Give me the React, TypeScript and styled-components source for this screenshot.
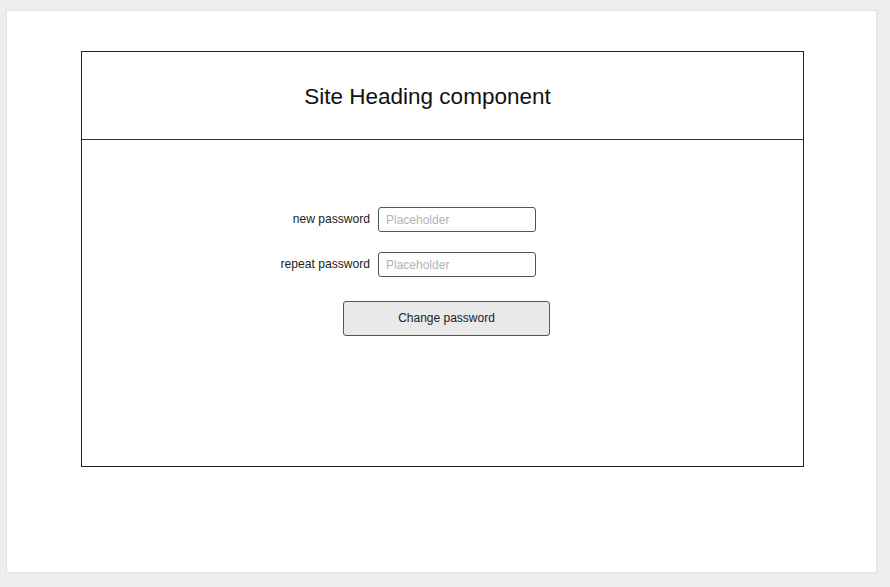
import React from "react";
import styled, { createGlobalStyle } from "styled-components";

const Global = createGlobalStyle`
  html, body { margin: 0; padding: 0; background: #ededed; }
  body { font-family: "Liberation Sans", Arial, sans-serif; }
  * { box-sizing: border-box; }
`;

const Page = styled.div`
  padding: 10px 13px 14px 6px;
  width: 890px;
  height: 587px;
`;

const Card = styled.div`
  background: #ffffff;
  border: 1px solid #e2e2e2;
  height: 563px;
  padding: 40px 0 0 74px;
`;

const Frame = styled.div`
  width: 723px;
  height: 416px;
  border: 1px solid #222222;
  display: flex;
  flex-direction: column;
`;

const Header = styled.header`
  height: 88px;
  border-bottom: 1px solid #333333;
  display: flex;
  align-items: center;
  justify-content: center;
  padding-right: 30px;
  padding-top: 3px;
`;

const Heading = styled.h1`
  margin: 0;
  font-size: 22.5px;
  font-weight: 400;
  color: #111111;
`;

const Body = styled.main`
  flex: 1;
  padding: 67px 0 0 188px;
`;

const Form = styled.form`
  display: grid;
  grid-template-columns: 100px 158px;
  column-gap: 8px;
  row-gap: 20px;
  align-items: center;
`;

const Label = styled.label`
  text-align: right;
  font-size: 12.1px;
  color: #222222;
  padding-bottom: 2px;
`;

const Input = styled.input`
  width: 158px;
  height: 25px;
  border: 1px solid #555555;
  border-radius: 3px;
  padding: 0 7px;
  font-family: "Liberation Sans", Arial, sans-serif;
  font-size: 12px;
  color: #222;
  outline: none;
  &::placeholder { color: #b3b3b3; }
`;

const Button = styled.button`
  grid-column: 1 / span 2;
  margin: 4px 0 0 73px;
  width: 207px;
  height: 35px;
  padding: 0 0 2px;
  background: #e9e9e9;
  border: 1px solid #555555;
  border-radius: 3px;
  font-family: "Liberation Sans", Arial, sans-serif;
  font-size: 12px;
  color: #222222;
`;

export default function App() {
  return (
    <Page>
      <Global />
      <Card>
        <Frame>
          <Header>
            <Heading>Site Heading component</Heading>
          </Header>
          <Body>
            <Form onSubmit={(e) => e.preventDefault()}>
              <Label htmlFor="np">new password</Label>
              <Input id="np" type="password" placeholder="Placeholder" />
              <Label htmlFor="rp">repeat password</Label>
              <Input id="rp" type="password" placeholder="Placeholder" />
              <Button type="submit">Change password</Button>
            </Form>
          </Body>
        </Frame>
      </Card>
    </Page>
  );
}
